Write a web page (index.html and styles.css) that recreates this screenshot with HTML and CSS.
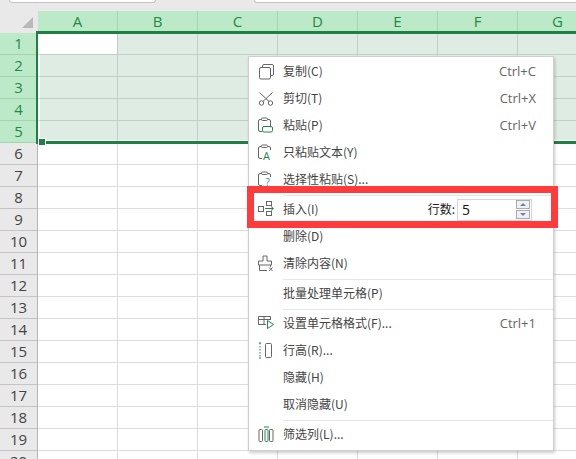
FILE: index.html
```html
<!DOCTYPE html>
<html lang="zh-CN">

<head>
    <meta charset="UTF-8">
    <title>插入行</title>
    <link rel="stylesheet" href="styles.css">
</head>

<body>
    <div class="sheet">
        <div class="top-bar">
            <div class="tab tab-first"></div>
            <div class="tab tab-second"></div>
        </div>

        <div class="col-heads">
            <div class="corner"><span class="corner-mark"></span></div>
            <div class="col-head">A</div>
            <div class="col-head">B</div>
            <div class="col-head">C</div>
            <div class="col-head">D</div>
            <div class="col-head">E</div>
            <div class="col-head">F</div>
            <div class="col-head">G</div>
        </div>

        <div class="sheet-body">
            <div class="row-heads">
                <div class="row-head active">1</div>
                <div class="row-head active">2</div>
                <div class="row-head active">3</div>
                <div class="row-head active">4</div>
                <div class="row-head active">5</div>
                <div class="row-head">6</div>
                <div class="row-head">7</div>
                <div class="row-head">8</div>
                <div class="row-head">9</div>
                <div class="row-head">10</div>
                <div class="row-head">11</div>
                <div class="row-head">12</div>
                <div class="row-head">13</div>
                <div class="row-head">14</div>
                <div class="row-head">15</div>
                <div class="row-head">16</div>
                <div class="row-head">17</div>
                <div class="row-head">18</div>
                <div class="row-head">19</div>
                <div class="row-head">20</div>
            </div>
            <div class="cells"></div>
        </div>

        <!-- selected rows 1-5 -->
        <div class="selection">
            <div class="selection-fill">
                <div class="active-cell"></div>
            </div>
            <div class="fill-handle"></div>
        </div>

        <!-- context menu -->
        <div class="menu">
            <div class="item">
                <span class="slot">
                    <svg class="icon" viewBox="0 0 18 18">
                        <rect x="5.5" y="1.5" width="11" height="11" rx="1.5" />
                        <rect class="solid" x="2.5" y="4.5" width="11" height="11.5" rx="1.5" />
                    </svg>
                </span>
                <span class="label">复制(C)</span>
                <span class="keys">Ctrl+C</span>
            </div>
            <div class="item">
                <span class="slot">
                    <svg class="icon" viewBox="0 0 18 18">
                        <circle cx="4.5" cy="13" r="2.2" />
                        <circle cx="13.5" cy="13" r="2.2" />
                        <path d="M6 11.4 15.5 2.5M12 11.4 2.5 2.5" />
                    </svg>
                </span>
                <span class="label">剪切(T)</span>
                <span class="keys">Ctrl+X</span>
            </div>
            <div class="item">
                <span class="slot">
                    <svg class="icon" viewBox="0 0 18 18">
                        <path d="M5.500 14.500H3A1.500 1.500 0 0 1 1.500 13V4A1.500 1.500 0 0 1 3 2.500H4.500M10.500 2.500H12A1.500 1.500 0 0 1 13.500 4V9" />
                        <rect x="4.500" y="1" width="6" height="2.500" rx="1" />
                        <rect class="green" x="5.500" y="9.500" width="10" height="5.500" rx="1.500" />
                    </svg>
                </span>
                <span class="label">粘贴(P)</span>
                <span class="keys">Ctrl+V</span>
            </div>
            <div class="item">
                <span class="slot">
                    <svg class="icon" viewBox="0 0 18 18">
                        <path d="M5 14.500H3A1.500 1.500 0 0 1 1.500 13V4A1.500 1.500 0 0 1 3 2.500H4.500M10.500 2.500H12A1.500 1.500 0 0 1 13.500 4V6" />
                        <rect x="4.500" y="1" width="6" height="2.500" rx="1" />
                        <text class="glyph-green" x="6" y="15.500">A</text>
                    </svg>
                </span>
                <span class="label">只粘贴文本(Y)</span>
            </div>
            <div class="item">
                <span class="slot">
                    <svg class="icon" viewBox="0 0 18 18">
                        <path d="M5 14.500H3A1.500 1.500 0 0 1 1.500 13V4A1.500 1.500 0 0 1 3 2.500H4.500M10.500 2.500H12A1.500 1.500 0 0 1 13.500 4V6" />
                        <rect x="4.500" y="1" width="6" height="2.500" rx="1" />
                        <text class="glyph-blue" x="8.500" y="15">?</text>
                    </svg>
                </span>
                <span class="label">选择性粘贴(S)...</span>
            </div>
            <div class="sep"></div>
            <div class="item">
                <span class="slot">
                    <svg class="icon" viewBox="0 0 18 18">
                        <rect x="1.500" y="5.500" width="5" height="5" />
                        <rect x="9.500" y="0.500" width="5" height="4" />
                        <rect x="9.500" y="10.500" width="5" height="4" />
                        <path class="green" d="M8 7.500h8M14 5.500l2.500 2-2.500 2" />
                    </svg>
                </span>
                <span class="label">插入(I)</span>
                <span class="row-count">
                    <span class="row-count-label">行数:</span>
                    <span class="spin-box">
                        <span class="spin-value">5</span>
                        <span class="spin-buttons">
                            <span class="spin-btn"><span class="arrow-up"></span></span>
                            <span class="spin-btn"><span class="arrow-down"></span></span>
                        </span>
                    </span>
                </span>
            </div>
            <div class="item">
                <span class="slot"></span>
                <span class="label">删除(D)</span>
            </div>
            <div class="item">
                <span class="slot">
                    <svg class="icon" viewBox="0 0 18 18">
                        <path d="M6 1h4v5h4.500v4h-13V6H6zM2.500 10v5.500H10M13.500 10v2" />
                        <path d="M12 12.500l3.500 3.500M15.500 12.500 12 16" />
                    </svg>
                </span>
                <span class="label">清除内容(N)</span>
            </div>
            <div class="sep"></div>
            <div class="item">
                <span class="slot"></span>
                <span class="label">批量处理单元格(P)</span>
            </div>
            <div class="sep"></div>
            <div class="item">
                <span class="slot">
                    <svg class="icon" viewBox="0 0 18 18">
                        <path d="M9 9.500H1.500v-8h12V5M1.500 4.500h12M7 1.500v8" />
                        <path class="green" d="M10.500 5.500v8l6-4z" />
                    </svg>
                </span>
                <span class="label">设置单元格格式(F)...</span>
                <span class="keys">Ctrl+1</span>
            </div>
            <div class="item">
                <span class="slot">
                    <svg class="icon" viewBox="0 0 18 18">
                        <rect x="8.500" y="1.500" width="6" height="14" rx="1" />
                        <path class="green dotted" d="M3 1v15" />
                        <path class="green" d="M2 1h2M2 16h2" />
                    </svg>
                </span>
                <span class="label">行高(R)...</span>
            </div>
            <div class="item">
                <span class="slot"></span>
                <span class="label">隐藏(H)</span>
            </div>
            <div class="item">
                <span class="slot"></span>
                <span class="label">取消隐藏(U)</span>
            </div>
            <div class="sep"></div>
            <div class="item">
                <span class="slot">
                    <svg class="icon" viewBox="0 0 18 18">
                        <rect x="2" y="3.500" width="3.500" height="12" rx="1" />
                        <rect class="green" x="8" y="3.500" width="3" height="12" rx="1" />
                        <rect x="12.500" y="3.500" width="3.500" height="12" rx="1" />
                        <path class="green" d="M7 1h5" />
                    </svg>
                </span>
                <span class="label">筛选列(L)...</span>
            </div>
        </div>

        <!-- red box drawn on the screenshot -->
        <div class="highlight"></div>
    </div>
</body>

</html>
```

FILE: styles.css
```css
* {
    box-sizing: border-box;
}

body {
    margin: 0;
    background-color: white;
    font-family: "Noto Sans CJK SC", "Noto Sans", sans-serif;
}

.sheet {
    position: relative;
    width: 576px;
    height: 459px;
    overflow: hidden;
}

.top-bar {
    display: flex;
    height: 11px;
    background-color: #e9e9e9;
}

.tab {
    height: 3px;
    background-color: white;
    border-bottom: 1px solid #c6c6c6;
}

.tab-first {
    width: 147px;
    margin-left: 9px;
    border-left: 1px solid #c6c6c6;
    border-right: 1px solid #c6c6c6;
    border-radius: 0 0 4px 4px;
}

.tab-second {
    flex: 1;
    margin-left: 98px;
    border-left: 1px solid #c6c6c6;
    border-radius: 0 0 0 4px;
}

.col-heads {
    display: flex;
    height: 22px;
}

.corner {
    flex: 0 0 38px;
    background-color: #e9e9e9;
    padding: 6px 0 0 22px;
}

.corner-mark {
    display: block;
    width: 0;
    height: 0;
    border-left: 11px solid transparent;
    border-bottom: 11px solid #b9b9b9;
}

.col-head {
    flex: 0 0 80px;
    background-color: #bce9c8;
    border-right: 1px solid #a3d3b1;
    color: #1f8a45;
    font-family: "Open Sans", sans-serif;
    font-size: 15px;
    line-height: 21px;
    text-align: center;
}

.sheet-body {
    display: flex;
    height: 426px;
}

.row-heads {
    flex: 0 0 38px;
    background-color: #e9e9e9;
    border-right: 1px solid #b5b5b5;
}

.row-head {
    height: 22px;
    border-bottom: 1px solid #c4c4c4;
    color: #444;
    font-family: "Open Sans", sans-serif;
    font-size: 15px;
    line-height: 21px;
    text-align: center;
}

.row-head.active {
    background-color: #bce9c8;
    border-bottom-color: #a3d3b1;
    color: #1f8a45;
}

.cells {
    flex: 1;
    background-color: white;
    background-image:
        linear-gradient(to right, transparent 79px, #dddddd 79px),
        linear-gradient(to bottom, transparent 21px, #dddddd 21px);
    background-size: 80px 22px;
}

.selection {
    position: absolute;
    left: 36px;
    top: 31px;
    right: 0;
    height: 113px;
    border-left: 2px solid #1f7f45;
    border-top: 3px solid #1f7f45;
    border-bottom: 3px solid #1f7f45;
    padding: 0 0 1px 2px;
}

.selection-fill {
    position: relative;
    height: 100%;
    background-color: rgba(32, 127, 69, 0.15);
}

.active-cell {
    position: absolute;
    left: -2px;
    top: 0;
    width: 79px;
    height: 20px;
    background-color: white;
}

.fill-handle {
    position: absolute;
    left: 0;
    bottom: -5px;
    width: 8px;
    height: 8px;
    background-color: #1f7f45;
    border: 1px solid white;
}

.menu {
    position: absolute;
    left: 248px;
    top: 56px;
    width: 306px;
    padding: 1px 0 2px;
    background-color: white;
    border: 1px solid #cfcfcf;
    box-shadow: 1px 2px 3px rgba(0, 0, 0, 0.2);
    color: #444;
    font-size: 12px;
}

.item {
    display: flex;
    align-items: center;
    height: 27px;
    padding-right: 17px;
}

.slot {
    display: flex;
    flex: 0 0 34px;
    padding-left: 8px;
}

.label {
    flex: 1;
    margin-bottom: 2px;
}

.keys {
    margin-bottom: 2px;
    color: #666;
    font-family: "Open Sans", sans-serif;
    font-size: 13px;
}

.sep {
    height: 3px;
    margin-left: 34px;
    padding-top: 1px;
    border-bottom: 1px solid #e6e6e6;
}

.icon {
    width: 18px;
    height: 18px;
    fill: none;
    stroke: #666;
    stroke-width: 1;
}

.icon .solid {
    fill: white;
}

.icon .green {
    stroke: #1f8a45;
}

.icon .dotted {
    stroke-dasharray: 1.500 1.500;
}

.glyph-green,
.glyph-blue {
    stroke: none;
    font-family: "Open Sans", sans-serif;
}

.glyph-green {
    fill: #1f8a45;
    font-size: 11px;
}

.glyph-blue {
    fill: #3a78c8;
    font-size: 10px;
}

.row-count {
    display: flex;
    align-items: center;
    gap: 2px;
    margin-right: 4px;
}

.row-count-label {
    margin-bottom: 2px;
    color: #222;
}

.spin-box {
    display: flex;
    align-items: center;
    justify-content: space-between;
    width: 75px;
    height: 22px;
    padding: 0 1px 0 4px;
    border: 1px solid #d6d6d6;
}

.spin-value {
    color: #111;
    font-family: "Open Sans", sans-serif;
    font-size: 14px;
}

.spin-buttons {
    display: flex;
    flex-direction: column;
    gap: 1px;
}

.spin-btn {
    display: flex;
    align-items: center;
    justify-content: center;
    width: 14px;
    height: 9px;
    background-color: #eef0f3;
    border: 1px solid #acacac;
}

.arrow-up {
    border-left: 3px solid transparent;
    border-right: 3px solid transparent;
    border-bottom: 3px solid #6a80c4;
}

.arrow-down {
    border-left: 3px solid transparent;
    border-right: 3px solid transparent;
    border-top: 3px solid #6a80c4;
}

.highlight {
    position: absolute;
    left: 247px;
    top: 186px;
    width: 311px;
    height: 42px;
    border: 7px solid #ff3b3b;
}
```
